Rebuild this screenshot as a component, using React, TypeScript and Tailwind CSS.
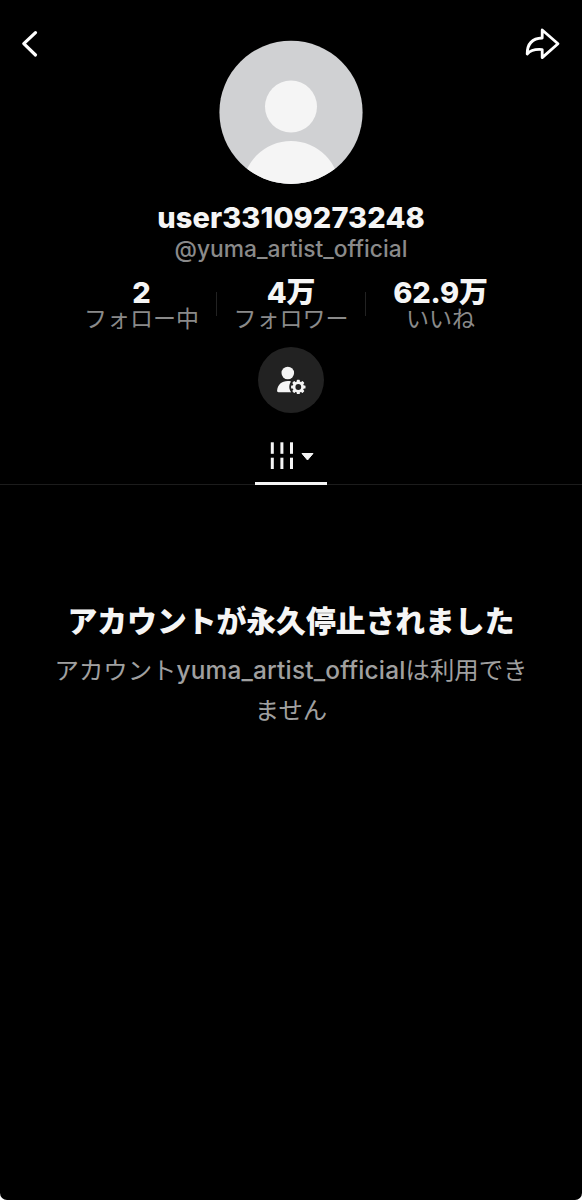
import React from 'react';

const STATS = [
  { value: '2', label: 'フォロー中' },
  { value: '4万', label: 'フォロワー' },
  { value: '62.9万', label: 'いいね' },
];

const GEAR_TEETH = [0, 45, 90, 135, 180, 225, 270, 315];

const BackIcon: React.FC = () => (
  <svg width="36" height="36" viewBox="0 0 36 36" fill="none" aria-hidden="true">
    <path d="M23.5 6.6L11.8 17.7l11.7 11.3" stroke="#fff" strokeWidth="3.2" strokeLinecap="round" strokeLinejoin="round" />
  </svg>
);

const ShareIcon: React.FC = () => (
  <svg width="36" height="36" viewBox="0 0 36 36" fill="none" aria-hidden="true">
    <path
      d="M18.2 4L34 17.7L18.2 31.6V23.6C11.5 23 6.5 24.2 3.2 28C3.2 18.8 7.5 12.4 18.2 12Z"
      stroke="#fff"
      strokeWidth="2.8"
      strokeLinejoin="round"
    />
  </svg>
);

const Avatar: React.FC = () => (
  <svg width="144" height="144" viewBox="0 0 144 144" aria-hidden="true">
    <defs>
      <clipPath id="avatar-clip">
        <circle cx="72" cy="72.3" r="71.6" />
      </clipPath>
    </defs>
    <g clipPath="url(#avatar-clip)">
      <rect width="144" height="144" fill="#d0d1d3" />
      <circle cx="72" cy="66.6" r="26" fill="#f5f5f5" />
      <circle cx="72" cy="149.5" r="48.5" fill="#f5f5f5" />
    </g>
  </svg>
);

const UserGearIcon: React.FC = () => (
  <svg width="30" height="28" viewBox="0 0 30 28" aria-hidden="true">
    <circle cx="11.8" cy="7" r="6.3" fill="#f5f5f5" />
    <path d="M11.8 15C5.6 15 1.7 18.6 1.1 24.6C1 25.6 1.6 26.2 2.5 26.2H15.2C12.6 22.8 12.8 18.8 15 15.5C14.1 15.1 13 15 11.8 15Z" fill="#f5f5f5" />
    <g transform="translate(22.3 21)">
      {GEAR_TEETH.map((angle) => (
        <rect key={angle} x="-1.5" y="-7.2" width="3" height="3.2" rx="0.6" fill="#f5f5f5" transform={`rotate(${angle})`} />
      ))}
      <circle r="4.3" fill="none" stroke="#f5f5f5" strokeWidth="2.8" />
    </g>
  </svg>
);

const GridIcon: React.FC = () => (
  <svg width="24" height="28" viewBox="0 0 24 28" fill="#f5f5f5" aria-hidden="true">
    {[0.8, 10.4, 20].map((x) => (
      <g key={x}>
        <rect x={x} y="0.3" width="3" height="11.5" />
        <rect x={x} y="15.7" width="3" height="11.3" />
      </g>
    ))}
  </svg>
);

export default function App() {
  return (
    <div className="h-[1200px] w-[582px] bg-white">
      <main className="flex h-full flex-col overflow-hidden rounded-b-[7px] bg-black font-['Inter','Noto_Sans_CJK_JP',sans-serif] text-[#f5f5f5]">
        <header className="flex items-start justify-between px-3 pt-10">
          <button className="-mt-[14px] w-12" aria-label="戻る">
            <BackIcon />
          </button>
          <Avatar />
          <button className="-mt-[14px] flex w-12 justify-end pr-[10px]" aria-label="シェア">
            <ShareIcon />
          </button>
        </header>

        <section className="flex flex-col items-center pt-[17px]">
          <h1 className="h-[34px] whitespace-nowrap text-[29px] font-extrabold leading-[34px] tracking-[0.1px]">user33109273248</h1>
          <p className="h-7 whitespace-nowrap text-[22.8px] font-medium leading-7 text-[#8a8a8a]">@yuma_artist_official</p>

          <ul className="mt-[15px] flex items-center">
            {STATS.map((stat, i) => (
              <li key={stat.label} className="flex items-center">
                {i > 0 && <span className="h-6 w-px bg-[#222]" />}
                <div className="flex w-[148.5px] flex-col items-center whitespace-nowrap">
                  <strong className="text-[29px] font-extrabold leading-[30px] tracking-[-0.2px]">{stat.value}</strong>
                  <span className="text-[23px] leading-[22px] text-[#8a8a8a]">{stat.label}</span>
                </div>
              </li>
            ))}
          </ul>

          <button className="-mb-px mt-[17px] flex size-[66px] items-center justify-center rounded-full bg-[#222]" aria-label="アカウント設定">
            <UserGearIcon />
          </button>
        </section>

        <nav className="mt-[29px] flex h-11 justify-center border-b border-[#1c1c1c]">
          <button className="-mb-px flex w-[72px] items-start justify-center gap-[7px] border-b-[3px] border-[#f5f5f5] pl-[2px] pt-px" aria-label="投稿">
            <GridIcon />
            <svg width="13" height="8" viewBox="0 0 13 8" className="mt-[11px]" aria-hidden="true">
              <path d="M1 0.5H12L6.5 7Z" fill="#f5f5f5" stroke="#f5f5f5" strokeLinejoin="round" />
            </svg>
          </button>
        </nav>

        <section className="mt-[116px] text-center">
          <h2 className="whitespace-nowrap text-[29.8px] font-black leading-10">アカウントが永久停止されました</h2>
          <p className="mt-[10px] whitespace-nowrap text-[24.4px] leading-[39.5px] text-[#a0a0a0]">
            アカウント<span className="font-medium tracking-[0.2px]">yuma_artist_official</span>は利用でき
            <br />
            ません
          </p>
        </section>
      </main>
    </div>
  );
}
